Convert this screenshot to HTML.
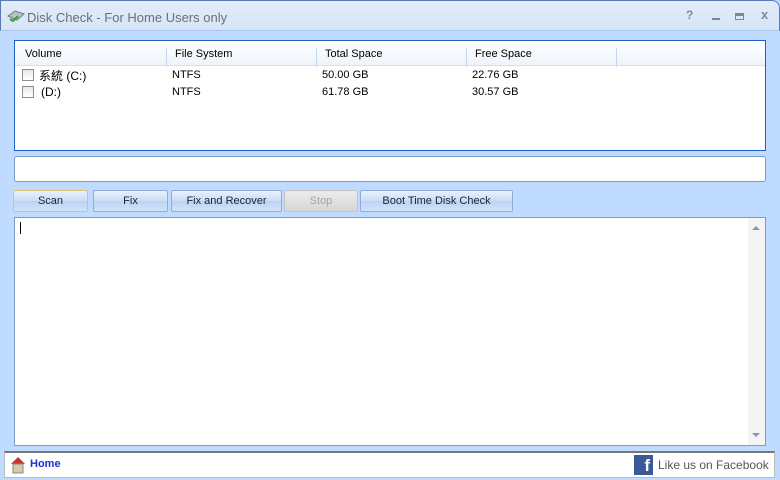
<!DOCTYPE html>
<html><head><style>
*{box-sizing:border-box;margin:0;padding:0}
body{width:780px;height:480px;overflow:hidden;font-family:"Liberation Sans","Noto Sans CJK SC",sans-serif;font-size:11px;background:#bfdbff;position:relative}
.abs{position:absolute}
.title{left:0;top:0;width:780px;height:31px;background:linear-gradient(#e3edfa,#d5e4f7);border:1px solid #587ab0;border-bottom:1px solid #a9c6ec;border-radius:0 8px 0 0}
.title span{position:absolute;left:26px;top:9px;font-size:13px;color:#6a6f7c}
.list{left:14px;top:40px;width:752px;height:111px;background:#fff;border:1px solid #1c62c4}
.hdr{position:absolute;left:0;top:0;width:750px;height:25px;background:linear-gradient(#fff,#eef4fc);border-bottom:1px solid #d5e0ee}
.hdr div{position:absolute;top:7px}
.sep{position:absolute;top:3px;width:1px;height:19px;background:#c6d7ec}
.row div{position:absolute}
.cb{width:12px;height:12px;border:1px solid #8f8f8f;background:linear-gradient(#e8e8e8,#fff)}
.prog{left:14px;top:156px;width:752px;height:26px;background:#fff;border:1px solid #7a9cc6;border-radius:3px}
.btn{top:190px;height:22px;border:1px solid #8fadd6;border-radius:2px;background:linear-gradient(#e9f1fc,#c9dcf5 50%,#bcd3f1 51%,#d2e3f8);text-align:center;line-height:20px;color:#15233a}
.txt{left:14px;top:217px;width:752px;height:229px;background:#fff;border:1px solid #7a9cc6}
.status{left:4px;top:451px;width:771px;height:27px;background:#fff;border:1px solid #bbb;border-top:2px solid #777}
</style></head><body>
<div class="abs title">
<svg style="position:absolute;left:6px;top:9px" width="18" height="12"><path d="M1 6 L8 1 L17 4 L10 10 Z" fill="#b9c2c8" stroke="#6f7a80"/><path d="M3 9l3 2 5-5" stroke="#3a9a3a" stroke-width="2" fill="none"/></svg>
<span>Disk Check - For Home Users only</span>
<span style="left:685px;top:7px;font-weight:bold;color:#7a8aa5;font-size:12px">?</span>
<div class="abs" style="left:711px;top:17px;width:8px;height:2px;background:#7d8799"></div>
<div class="abs" style="left:734px;top:12px;width:9px;height:7px;border:1px solid #7d8799;border-top:3px solid #7d8799"></div>
<span style="left:760px;top:6px;font-weight:bold;color:#7a8aa5;font-size:13px">x</span>
</div>
<div class="abs list">
<div class="hdr">
<div style="left:10px">Volume</div><div class="sep" style="left:151px"></div>
<div style="left:160px">File System</div><div class="sep" style="left:301px"></div>
<div style="left:310px">Total Space</div><div class="sep" style="left:451px"></div>
<div style="left:460px">Free Space</div><div class="sep" style="left:601px"></div>
</div>
<div class="row">
<div class="cb" style="left:7px;top:28px"></div><div style="left:24px;top:26px;font-size:12px">系統 (C:)</div>
<div style="left:157px;top:28px">NTFS</div><div style="left:307px;top:28px">50.00 GB</div><div style="left:457px;top:28px">22.76 GB</div>
<div class="cb" style="left:7px;top:45px"></div><div style="left:26px;top:44px;font-size:12px">(D:)</div>
<div style="left:157px;top:45px">NTFS</div><div style="left:307px;top:45px">61.78 GB</div><div style="left:457px;top:45px">30.57 GB</div>
</div></div>
<div class="abs prog"></div>
<div class="abs btn" style="left:13px;width:75px;border-color:#e0c070">Scan</div>
<div class="abs btn" style="left:93px;width:75px">Fix</div>
<div class="abs btn" style="left:171px;width:111px">Fix and Recover</div>
<div class="abs btn" style="left:284px;width:74px;background:linear-gradient(#ececec,#d6d6d6);border-color:#c4c4c4;color:#a5a5a5">Stop</div>
<div class="abs btn" style="left:360px;width:153px">Boot Time Disk Check</div>
<div class="abs txt">
<div class="abs" style="left:5px;top:4px;width:1px;height:12px;background:#000"></div>
<div class="abs" style="left:733px;top:0;width:17px;height:227px;background:#f4f4f4"></div>
<div class="abs" style="left:737px;top:8px;border:4px solid transparent;border-bottom:4px solid #8a96b4;border-top:0"></div>
<div class="abs" style="left:737px;top:215px;border:4px solid transparent;border-top:4px solid #8a96b4;border-bottom:0"></div>
</div>
<div class="abs status">
<svg style="position:absolute;left:4px;top:2px" width="18" height="20"><path d="M2 9 L9 2 L16 9 Z" fill="#c0392b"/><rect x="4" y="9" width="10" height="9" fill="#d9c8a8" stroke="#888"/></svg>
<span style="position:absolute;left:25px;top:5px;color:#1b30d0;font-weight:bold;font-size:11px">Home</span>
<div class="abs" style="left:629px;top:2px;width:19px;height:20px;background:#3b5998;color:#fff;font-weight:bold;font-size:17px;text-align:right;padding-right:3px;line-height:22px">f</div>
<span style="position:absolute;left:653px;top:5px;color:#555;font-size:12px">Like us on Facebook</span>
</div>
</body></html>
